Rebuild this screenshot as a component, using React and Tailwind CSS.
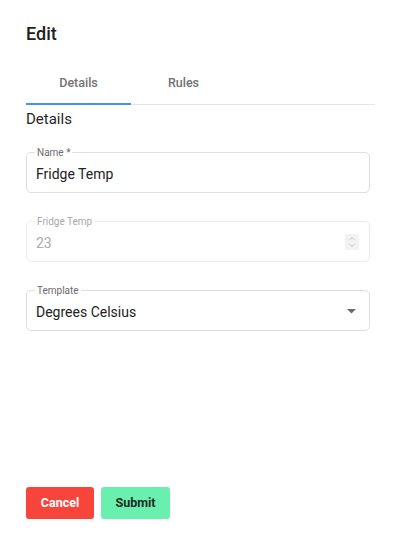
import React from "react";

function Field({ label, children, disabled }) {
  return (
    <div
      className={`relative flex h-[41px] items-center justify-between rounded-[5px] border pl-[9px] pr-[9px] pt-[3px] ${
        disabled ? "border-[#ececec]" : "border-[#dedede]"
      }`}
    >
      <span
        className={`absolute left-[8px] top-[-6px] bg-white px-[2px] text-[10px] leading-[11px] ${
          disabled ? "text-[#a8a8a8]" : "text-[#6b6b6b]"
        }`}
      >
        {label}
      </span>
      {children}
    </div>
  );
}

export default function App() {
  return (
    <div
      className="h-[538px] w-[400px] bg-white px-[26px] pt-[24px]"
      style={{ fontFamily: "Roboto, 'Liberation Sans', sans-serif" }}
    >
      <h1 className="text-[18px] font-medium leading-[20px] text-[#212121]">Edit</h1>
      <div className="mr-[-1px] mt-[29px] flex border-b border-[#e5e5e5]">
        <div className="relative flex h-[31px] w-[105px] items-start justify-center pt-[1px] text-[12.5px] font-medium text-[#727272]">
          Details
          <span className="absolute bottom-[-1px] left-0 h-[2px] w-full bg-[#3f97ec]" />
        </div>
        <div className="flex h-[31px] w-[105px] items-start justify-center pt-[1px] text-[12.5px] font-medium text-[#727272]">
          Rules
        </div>
      </div>
      <h2 className="mt-[4px] text-[15px] leading-[20px] text-[#262626]">Details</h2>
      <div className="mr-[4px] mt-[23px] flex flex-col gap-[28px]">
        <Field label="Name *">
          <span className="text-[14px] text-[#222]">Fridge Temp</span>
        </Field>
        <Field label="Fridge Temp" disabled>
          <span className="text-[14px] text-[#ababab]">23</span>
          <span className="mr-[1px] mt-[-3px] flex h-[16px] w-[14px] flex-col items-center justify-center bg-[#f2f2f2]">
            <svg width="8" height="14" viewBox="0 0 8 14" fill="none" stroke="#c4c4c4" strokeWidth="1">
              <path d="M1.5 5 L4 2.5 L6.5 5" />
              <path d="M1.5 9 L4 11.5 L6.5 9" />
            </svg>
          </span>
        </Field>
        <Field label="Template">
          <span className="text-[14px] text-[#222]">Degrees Celsius</span>
          <svg width="9" height="5" viewBox="0 0 9 5" className="mr-[4px] mt-[-2px]">
            <path d="M0 0 L9 0 L4.5 4.5 Z" fill="#6a6a6a" />
          </svg>
        </Field>
      </div>
      <div className="mt-[156px] flex gap-[7px]">
        <button className="h-[32px] w-[68px] rounded-[3px] bg-[#f7453c] text-[12.5px] font-bold text-white">
          Cancel
        </button>
        <button className="h-[32px] w-[69px] rounded-[3px] bg-[#69f0ae] text-[12.5px] font-bold text-[#1b2a22]">
          Submit
        </button>
      </div>
    </div>
  );
}
